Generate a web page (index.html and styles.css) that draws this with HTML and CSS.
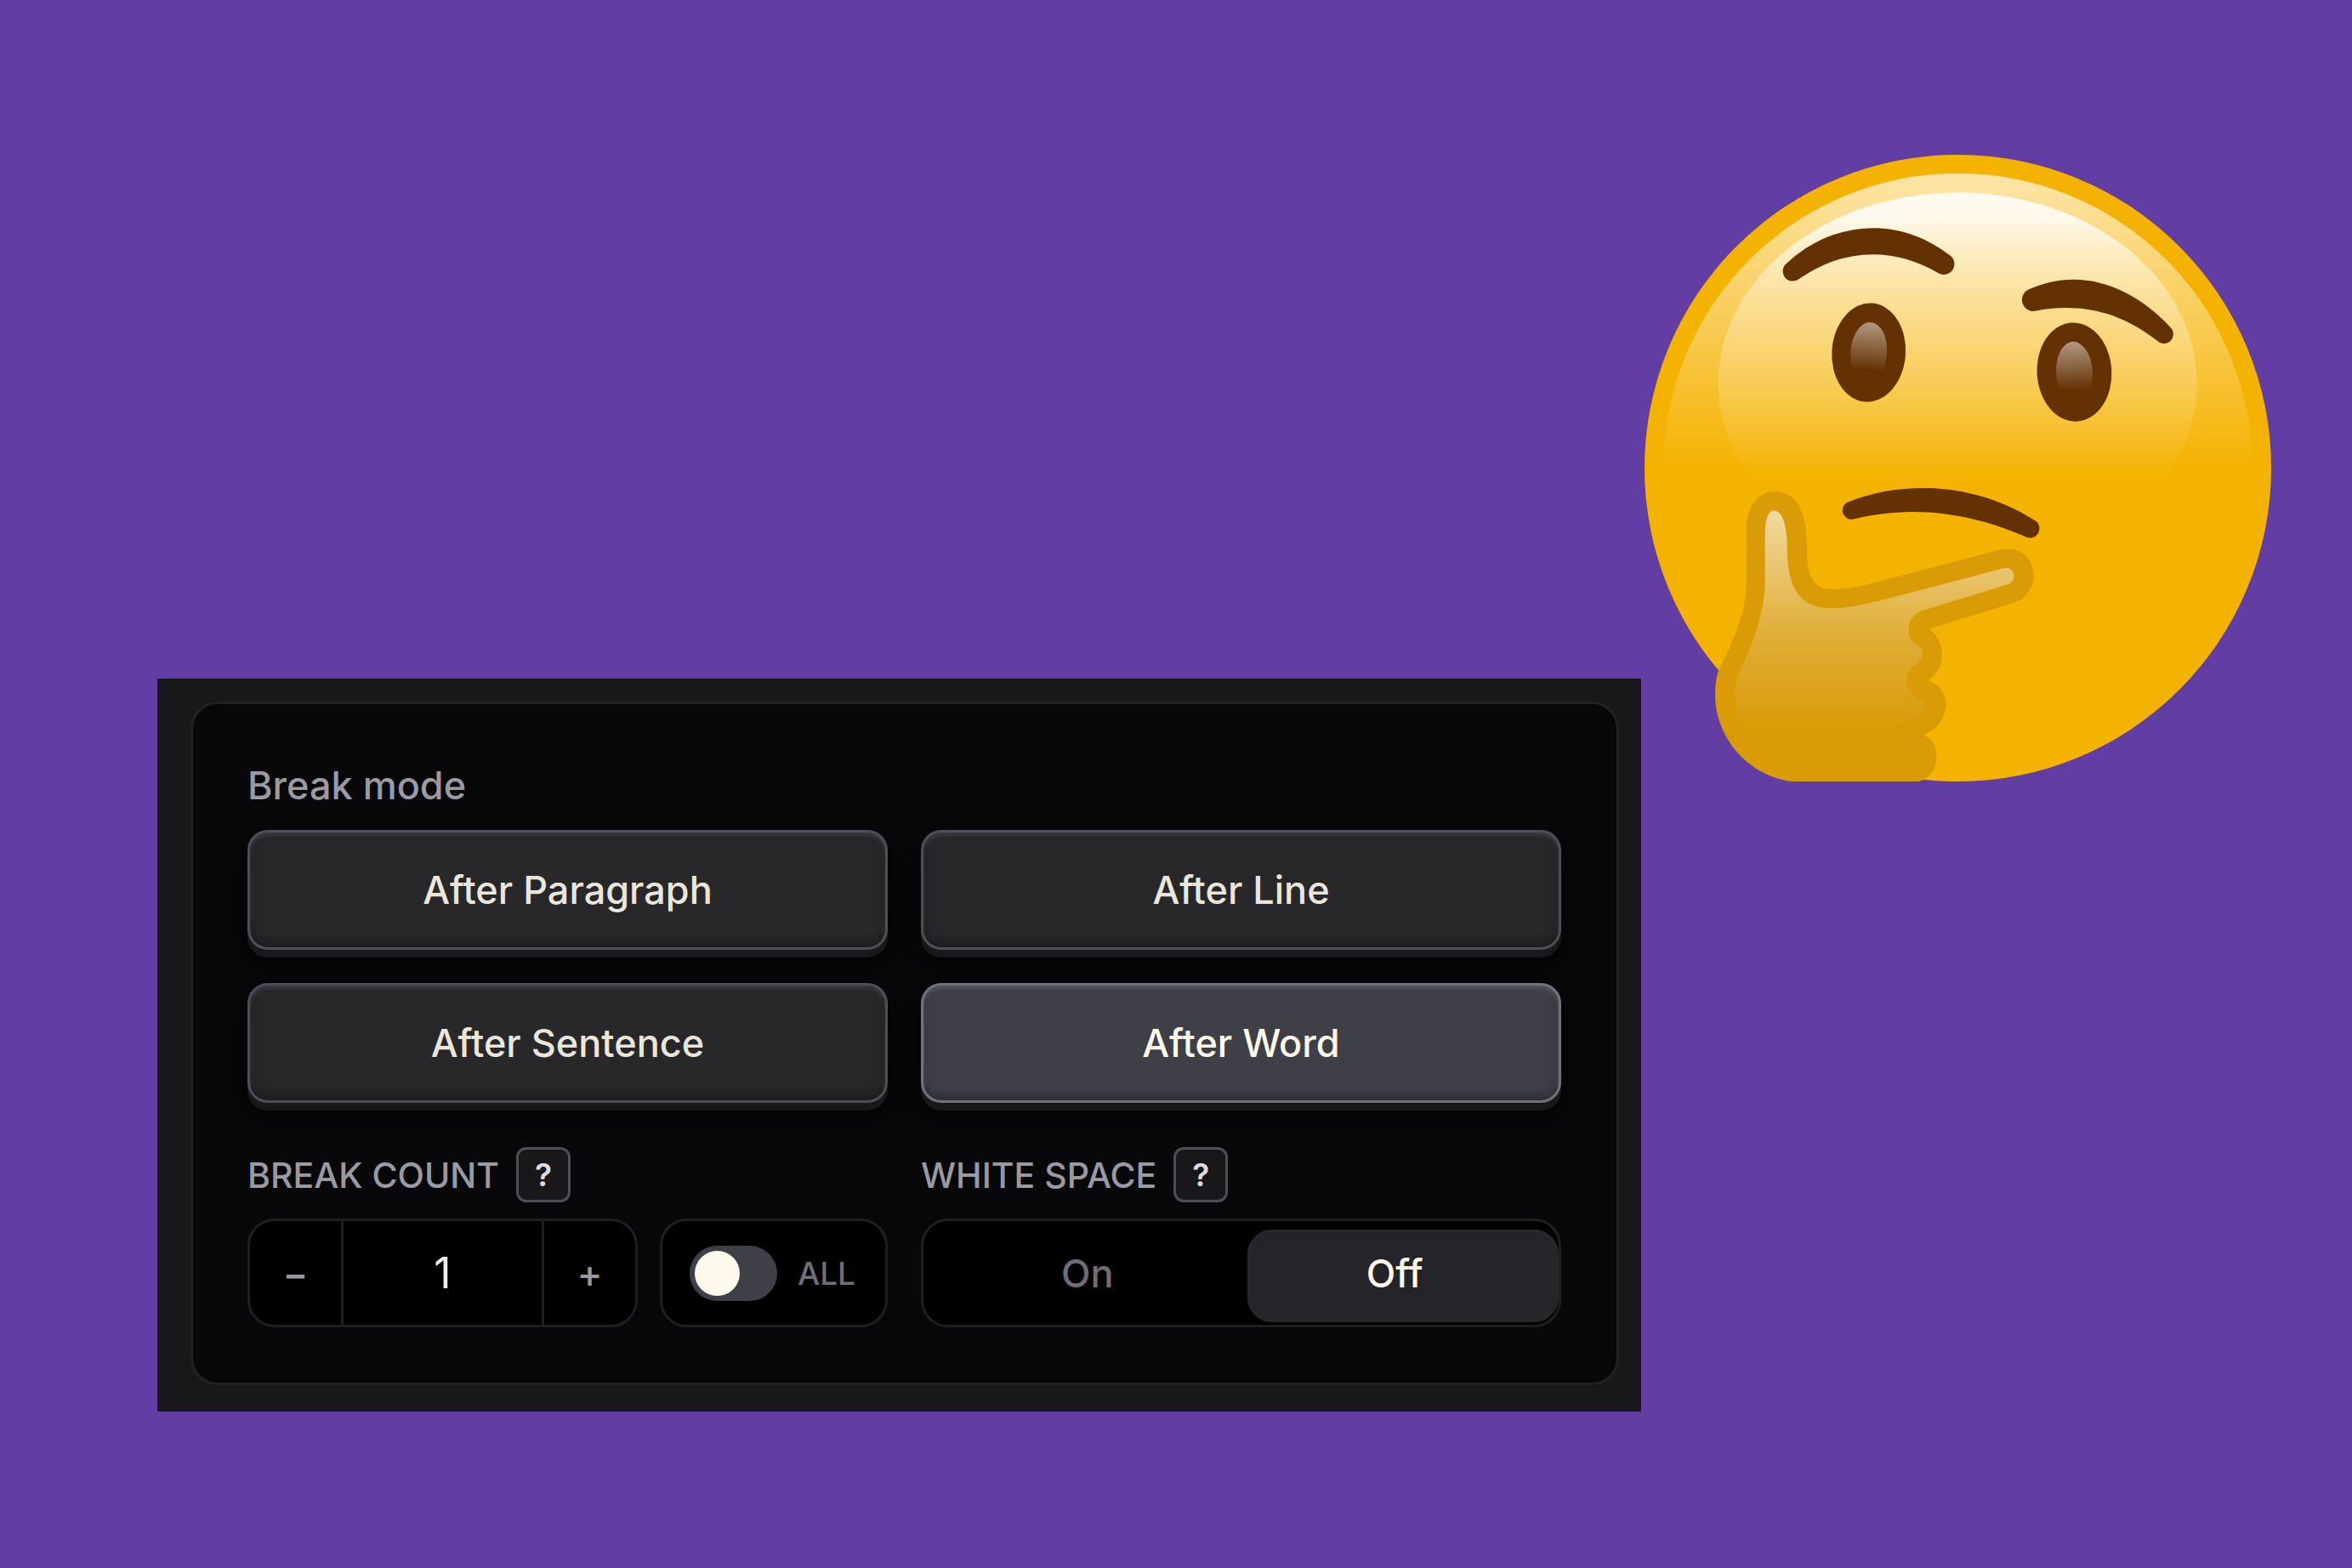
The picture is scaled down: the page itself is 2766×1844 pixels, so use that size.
FILE: index.html
```html
<!DOCTYPE html>
<html lang="en">
<head>
  <meta charset="UTF-8" />
  <meta name="viewport" content="width=device-width, initial-scale=1.0"/>
  <title>Break mode</title>
  <link rel="stylesheet" href="styles.css">
</head>
<body>

  <main class="panel">
    <div class="card">
      <h2 class="title">Break mode</h2>

      <div class="modes">
        <button class="mode" type="button">After Paragraph</button>
        <button class="mode" type="button">After Line</button>
        <button class="mode" type="button">After Sentence</button>
        <button class="mode active" type="button">After Word</button>
      </div>

      <div class="options">
        <div class="option">
          <div class="option-head">
            <label for="count">BREAK COUNT</label>
            <button class="help" type="button">?</button>
          </div>
          <div class="row">
            <div class="stepper">
              <button class="step" type="button" id="minus">−</button>
              <input class="count" type="text" inputmode="numeric" id="count" value="1" />
              <button class="step" type="button" id="plus">+</button>
            </div>
            <label class="all" for="all">
              <input class="switch" type="checkbox" id="all" />
              ALL
            </label>
          </div>
        </div>

        <div class="option">
          <div class="option-head">
            <span id="space-label">WHITE SPACE</span>
            <button class="help" type="button">?</button>
          </div>
          <div class="segment" role="group" aria-labelledby="space-label">
            <span class="pill"></span>
            <button class="seg" type="button" aria-pressed="false">On</button>
            <button class="seg selected" type="button" aria-pressed="true">Off</button>
          </div>
        </div>
      </div>
    </div>
  </main>

  <svg class="emoji" viewBox="67 63 1445 1445" role="img" aria-label="Thinking face">
    <defs>
      <linearGradient id="rim" gradientUnits="userSpaceOnUse" x1="0" y1="106" x2="0" y2="785">
        <stop offset="0" stop-color="#fff" stop-opacity=".66"/>
        <stop offset="1" stop-color="#fff" stop-opacity="0"/>
      </linearGradient>
      <linearGradient id="shine" gradientUnits="userSpaceOnUse" x1="0" y1="150" x2="0" y2="830">
        <stop offset="0" stop-color="#fff" stop-opacity=".85"/>
        <stop offset=".09" stop-color="#fff" stop-opacity=".8"/>
        <stop offset=".22" stop-color="#fff" stop-opacity=".5"/>
        <stop offset=".37" stop-color="#fff" stop-opacity=".34"/>
        <stop offset=".66" stop-color="#fff" stop-opacity=".17"/>
        <stop offset="1" stop-color="#fff" stop-opacity="0"/>
      </linearGradient>
      <linearGradient id="glint" x1="0" y1="0" x2="0" y2="1">
        <stop offset="0" stop-color="#fff" stop-opacity=".5"/>
        <stop offset=".8" stop-color="#fff" stop-opacity="0"/>
      </linearGradient>
      <linearGradient id="palm" gradientUnits="userSpaceOnUse" x1="0" y1="122" x2="0" y2="900">
        <stop offset="0" stop-color="#fff" stop-opacity=".62"/>
        <stop offset=".56" stop-color="#fff" stop-opacity=".2"/>
        <stop offset="1" stop-color="#fff" stop-opacity="0"/>
      </linearGradient>
    </defs>

    <!-- head -->
    <circle cx="789.5" cy="785.5" r="722.5" fill="#f5b301"/>
    <circle cx="789.5" cy="785" r="679" fill="url(#rim)"/>
    <ellipse cx="789" cy="590" rx="552" ry="440" fill="url(#shine)"/>

    <!-- eyes -->
    <ellipse cx="584" cy="519" rx="85" ry="114" fill="#643102" transform="rotate(4 584 519)"/>
    <ellipse cx="584" cy="519" rx="42" ry="70" fill="url(#glint)" transform="rotate(4 584 519)"/>
    <ellipse cx="1058" cy="564" rx="86" ry="114" fill="#643102" transform="rotate(-3 1058 564)"/>
    <ellipse cx="1058" cy="564" rx="42" ry="70" fill="url(#glint)" transform="rotate(-3 1058 564)"/>

    <!-- eyebrows -->
    <g transform="translate(352.8 176.4) scale(.6533)" fill="#643102">
      <path d="M64 210C150 128 260 85 370 85C470 85 560 120 638 180A36 36 0 0 1 600 244C530 202 450 178 370 178C270 178 185 212 107 265A33 33 0 0 1 64 210Z"/>
      <path d="M918 302C970 280 1020 267 1075 267C1220 267 1340 350 1418 435A31 31 0 0 1 1373 484C1270 405 1170 367 1050 367C1010 367 975 371 945 377A40 40 0 0 1 918 302Z"/>
    </g>

    <!-- mouth and hand -->
    <g transform="translate(196 803.6) scale(.6533)">
      <path fill="#643102" d="M525 91C600 60 690 43 790 43C930 43 1070 85 1180 157A33 33 0 0 1 1146 214C1010 155 880 127 750 127C670 127 600 138 540 152A31 31 0 0 1 525 91Z"/>
      <path fill="#d99b06" d="M263 55C340 55 375 130 375 240C375 340 390 400 460 400C500 400 540 394 585 384L1060 260C1125 246 1177 290 1176 352C1176 400 1145 435 1105 448L807 540C835 560 852 590 852 628C852 670 835 700 803 722C840 732 866 765 866 805C866 855 835 895 787 913C817 925 833 955 833 990C833 1040 805 1075 760 1080L340 1080C180 1070 52 930 52 775C52 740 55 715 63 688C100 610 162 500 162 380L162 190C162 110 200 55 263 55Z"/>
      <path fill="url(#palm)" d="M260 122C290 122 306 180 306 250C306 380 340 467 460 467C520 467 580 453 640 438L1070 326C1110 315 1120 370 1085 383L790 473C750 485 735 510 735 543C735 570 750 590 770 602C792 615 788 650 765 662C740 675 728 695 728 722C728 755 750 782 775 790C800 800 800 830 780 840C740 860 690 890 640 900L160 900C135 870 122 820 122 760C122 735 128 712 137 695C185 590 228 480 228 370L228 210C228 150 240 122 260 122Z"/>
    </g>
  </svg>

  <script>
    const count = document.getElementById("count");
    document.getElementById("minus").onclick = () => {
      count.value = Math.max(1, Number(count.value) - 1);
    };
    document.getElementById("plus").onclick = () => {
      count.value = Number(count.value) + 1;
    };
  </script>

</body>
</html>
```
FILE: styles.css
```css
* {
  box-sizing: border-box;
}
body {
  margin: 0;
  min-height: 100vh;
  padding: 182px 95px 184px 185px;
  display: grid;
  grid-template-columns: 1745fr 737fr;
  column-gap: 4px;
  background: #623ea4;
  font-family: Inter, "Liberation Sans", sans-serif;
  font-size: 45px;
  font-weight: 500;
  color: #9b9aa3;
}
button, input {
  font: inherit;
  color: inherit;
  margin: 0;
  padding: 0;
  border: none;
  background: none;
}
button {
  cursor: pointer;
}
.emoji {
  width: 100%;
  align-self: start;
}
.panel {
  align-self: end;
  padding: 27px 26px 31px 39px;
  background: #18181a;
}
.card {
  padding: 64px 65px 65px 64px;
  border: 3px solid #222224;
  border-radius: 32px;
  background: #08080a;
}
.title {
  margin: 0 0 20px;
  font-size: 45px;
  font-weight: 500;
  line-height: 64px;
}
.modes, .options {
  display: grid;
  grid-template-columns: repeat(2, minmax(0, 1fr));
  gap: 39px;
}
.mode {
  height: 141px;
  border: 3px solid #4f4e57;
  border-radius: 24px;
  background: #28282a;
  color: #ebe6da;
  box-shadow: 0 9px 0 #18181a, 0 16px 20px 4px #040404,
    inset 0 4px 4px #3a3a40, inset 0 -6px 12px #1c1c1f;
}
.mode.active {
  border-color: #73727b;
  background: #3f3f48;
  color: #fffaec;
  box-shadow: 0 9px 0 #18181a, 0 16px 20px 4px #040404,
    inset 0 4px 4px #55555d, inset 0 -6px 12px #2e2e34;
}
.options {
  margin-top: 52px;
}
.option-head {
  display: flex;
  align-items: center;
  gap: 20px;
  margin-bottom: 19px;
  font-size: 41px;
  white-space: nowrap;
}
.help {
  width: 64px;
  height: 65px;
  border: 3px solid #4f4e57;
  border-radius: 12px;
  background: #18181a;
  color: #dcdbdf;
  font-size: 37px;
  font-weight: 600;
}
.row {
  display: flex;
  gap: 26px;
}
.stepper, .all, .segment {
  display: flex;
  height: 128px;
  border: 3px solid #1f1f21;
  border-radius: 32px;
  background: #000;
}
.stepper {
  flex: 1;
  min-width: 0;
}
.step {
  width: 107px;
}
.count {
  flex: 1;
  min-width: 0;
  border: solid #1f1f21;
  border-width: 0 3px;
  text-align: center;
  font-size: 50px;
  font-weight: 400;
  color: #f2eee4;
}
.all {
  align-items: center;
  gap: 24px;
  padding: 0 35px 0 32px;
  font-size: 37px;
  color: #6f6e78;
}
.switch {
  appearance: none;
  width: 103px;
  height: 65px;
  padding: 6px;
  border-radius: 33px;
  background: #3f3f47;
}
.switch::before {
  content: "";
  display: block;
  width: 53px;
  height: 53px;
  border-radius: 50%;
  background: #fffaec;
}
.switch:checked::before {
  margin-left: auto;
}
.segment {
  position: relative;
  padding: 0 12px;
}
.seg {
  position: relative;
  flex: 1;
  color: #6f6e78;
}
.seg.selected {
  color: #fffaec;
}
.pill {
  position: absolute;
  top: 10px;
  right: 0;
  bottom: 3px;
  width: 49%;
  border: 3px solid #28282a;
  border-radius: 29px;
  background: #252529;
}
```
